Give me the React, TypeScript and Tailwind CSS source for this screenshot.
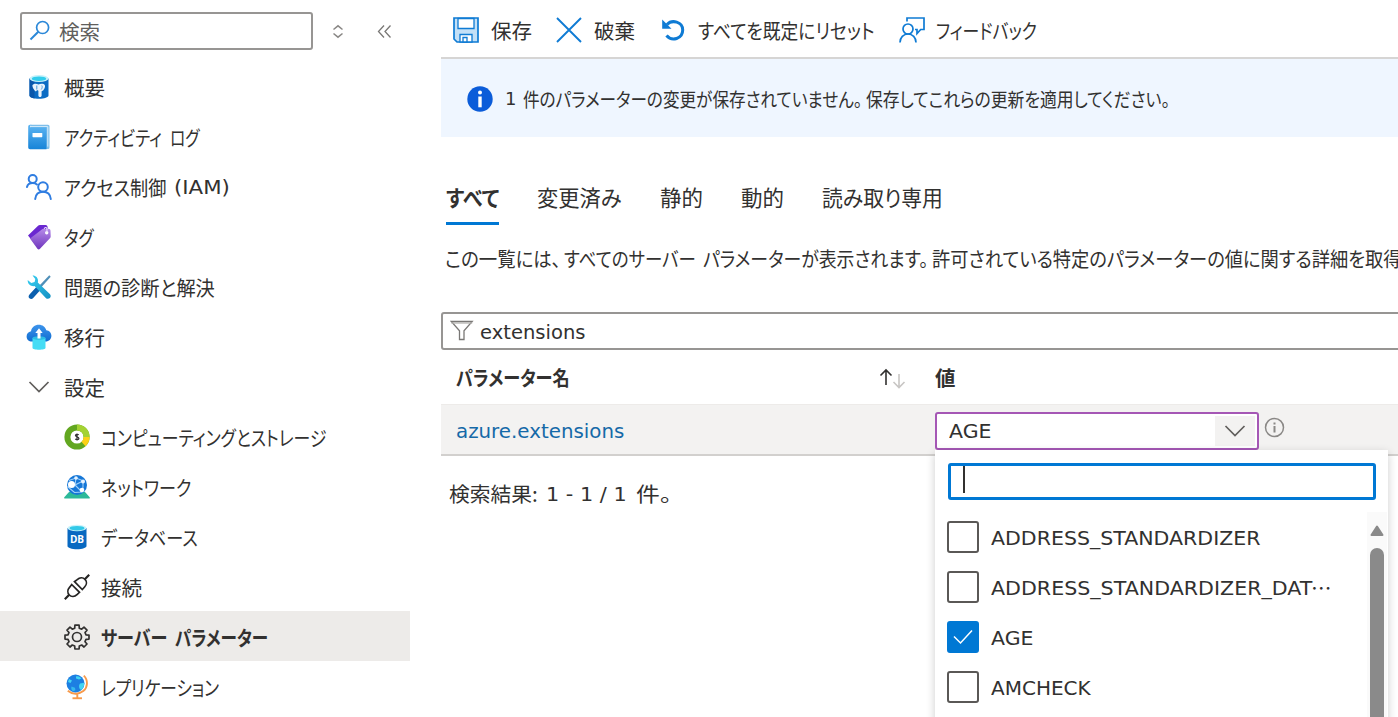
import { useLayoutEffect, useRef, useState } from 'react'
import type { ReactNode } from 'react'

// Labels use a condensed UI face: the run is squeezed horizontally until it
// fills exactly `w` pixels.
function Fit({ w, children, className = '' }: { w: number; children: ReactNode; className?: string }) {
  const ref = useRef<HTMLSpanElement>(null)
  const [scale, setScale] = useState(1)

  useLayoutEffect(() => {
    if (ref.current) setScale(w / ref.current.offsetWidth)
  }, [w])

  return (
    <span className={`block shrink-0 ${className}`} style={{ width: w }}>
      <span ref={ref} className="inline-block origin-left whitespace-nowrap" style={{ transform: `scaleX(${scale})` }}>
        {children}
      </span>
    </span>
  )
}

function SearchIcon() {
  return (
    <svg width="22" height="22" viewBox="0 0 22 22" fill="none" stroke="#2b88d8" strokeWidth="1.7">
      <circle cx="13.6" cy="7.500" r="6" />
      <path d="M9.3 11.800 1.5 19.500" strokeWidth="2" />
    </svg>
  )
}

function PostgresIcon() {
  return (
    <svg width="26" height="26" viewBox="0 0 26 26">
      <path d="M3.500 4.500v17c0 1.800 4.200 3.300 9.500 3.300s9.500-1.500 9.500-3.300v-17z" fill="#0b6cc4" />
      <path d="M3.500 4.500v17c0 1.500 2 2.600 5 3v-20z" fill="#0a57ab" />
      <ellipse cx="13" cy="4.500" rx="9.500" ry="3.500" fill="#c5f1fa" />
      <ellipse cx="13" cy="4.700" rx="7.200" ry="2.300" fill="#32cdec" />
      <path d="M6.500 11c2-1.900 4-1.100 6-.6 2.200-1 5.500-.9 6.400.8.600 1.700-.8 4.300-2 5.500-.9.200-1.300 0-1.300 1v4c-.3 1.700-2.900 1.700-3.200 0v-5l-1.300-.6-1.200 1.500C8.400 16.600 6 13.100 6.500 11z" fill="#e9f3fc" />
      <path d="M10.800 11.500v4m5-4c.8 1.200.3 2.900-.6 4" stroke="#4f9bd9" strokeWidth="1" fill="none" />
    </svg>
  )
}

function LogIcon() {
  return (
    <svg width="26" height="26" viewBox="0 0 26 26">
      <defs>
        <linearGradient id="log" x1="0" y1="0" x2="0" y2="1">
          <stop offset="0" stopColor="#5eb5f2" />
          <stop offset="1" stopColor="#1784d8" />
        </linearGradient>
      </defs>
      <path d="M4.500.700H22a1.500 1.500 0 0 1 1.500 1.500v21.300a1.500 1.500 0 0 1-1.500 1.500H4z" fill="#7fbfea" />
      <path d="M4 2.600h17.800v20" fill="none" stroke="#d8edfb" strokeWidth="1" />
      <path d="M4 3.300h16.500v22H4A1.800 1.800 0 0 1 2.200 23.500V2.500A1.800 1.800 0 0 1 4 .700h1.500L4 2z" fill="url(#log)" />
      <rect x="6.500" y="9" width="9.800" height="4.200" rx=".6" fill="#fff" />
    </svg>
  )
}

function PeopleIcon() {
  return (
    <svg width="26" height="26" viewBox="0 0 26 26" fill="none" stroke="#2f7de1" strokeWidth="2" strokeLinecap="round">
      <circle cx="6.700" cy="5" r="4" />
      <path d="M1 13c.5-2.500 2.700-4 5.700-4 1.800 0 3.200.5 4.200 1.400" />
      <circle cx="17" cy="13" r="4.800" />
      <path d="M9.200 25c.5-4.500 3.500-7.200 7.800-7.200s7.300 2.700 7.800 7.200" />
    </svg>
  )
}

function TagIcon() {
  return (
    <svg width="26" height="26" viewBox="0 0 26 26">
      <defs>
        <linearGradient id="tag" x1="0" y1="0" x2="0" y2="1">
          <stop offset="0" stopColor="#b58ae8" />
          <stop offset="1" stopColor="#6f35bd" />
        </linearGradient>
      </defs>
      <path d="M2 11.500 11.800 2c.6-.7 1.300-1 2.200-1h5.500c1.200 0 2 .7 2.100 2l.2 3L8 19z" fill="#6a28d0" />
      <path d="M4 14.500 16.500 5l6-.300c1.200 0 2 .8 2 2l.2 5.500c0 1-.3 1.600-1 2.200L14 24.800c-.9.900-1.800.8-2.600 0z" fill="url(#tag)" />
      <circle cx="20.700" cy="8.800" r="1.700" fill="#fff" />
      <path d="M18.200 5c.2-1.800 2-2 2.600-.7.400 1 .2 2.700-.1 4.200" stroke="#eadcfb" strokeWidth="1.100" fill="none" />
    </svg>
  )
}

function ToolsIcon() {
  return (
    <svg width="26" height="26" viewBox="0 0 26 26">
      <defs>
        <linearGradient id="wrench" x1="0" y1="0" x2="1" y2="1">
          <stop offset="0" stopColor="#37d0f2" />
          <stop offset="1" stopColor="#1490c3" />
        </linearGradient>
      </defs>
      <path d="M23.300 1.300 24.700 2.700 14 14.800l-2-1.900z" fill="#4f8fb8" />
      <path d="m11 12.300 3.600 3.400-7.400 8.400c-1.100 1.200-2.700 1.200-3.800.1-1.100-1.100-1-2.700.1-3.800z" fill="#0b5fae" />
      <path d="M6.500 1.600c3-.2 5.800 2.300 5.500 5.600l-.2 1.400 12 11.300c1.200 1.200 1.200 2.900.1 4.100-1.200 1.100-3 1.100-4.100-.1L8.500 12.100c-3.300.6-7-1.600-6.800-6.100l3.600 3 3.300-1 .7-3z" fill="url(#wrench)" />
    </svg>
  )
}

function MigrateIcon() {
  return (
    <svg width="26" height="26" viewBox="0 0 26 26">
      <defs>
        <linearGradient id="cloud" x1="0" y1="0" x2="0" y2="1">
          <stop offset="0" stopColor="#3d94ec" />
          <stop offset="1" stopColor="#0f6cd0" />
        </linearGradient>
      </defs>
      <path d="M6 17.500c-3.200 0-5.400-2.200-5.400-5.100 0-2.700 1.800-4.700 4.400-5.200C5.700 3.300 8.800.8 12.800.8c3.700 0 6.500 2.200 7.500 5.400 2.900.3 5.100 2.600 5.100 5.500 0 3.300-2.400 5.800-5.800 5.800z" fill="url(#cloud)" />
      <path d="M6.500 14h13v10c0 1-3 1.700-6.500 1.700S6.500 25 6.500 24z" fill="#45dcf5" />
      <ellipse cx="13" cy="14" rx="6.500" ry="1.800" fill="#2cbde4" />
      <path d="m13 4.300 3.700 4.700h-2.200v5.500h-3V9H9.300z" fill="#fff" />
    </svg>
  )
}

function Chevron({ className = '' }: { className?: string }) {
  return (
    <svg className={className} width="22" height="14" viewBox="0 0 22 14" fill="none" stroke="#605e5c" strokeWidth="1.700">
      <path d="m1.500 2 9.500 9.500L20.500 2" />
    </svg>
  )
}

function ComputeIcon() {
  return (
    <svg width="26" height="26" viewBox="0 0 26 26" fill="none">
      <circle cx="13" cy="13" r="9.600" stroke="#62a720" strokeWidth="6" />
      <path d="M13 3.400a9.600 9.600 0 0 1 9.600 9.600" stroke="#a4d233" strokeWidth="6" />
      <path d="M22.600 13a9.600 9.600 0 0 1-3.100 7" stroke="#fcd116" strokeWidth="6" />
      <path d="M14.700 11c-.7-1-3.200-1-3.200.5 0 1.600 3.400 1 3.400 2.900 0 1.600-2.700 1.600-3.600.4M13 9.500v7" stroke="#333" strokeWidth="1.300" />
    </svg>
  )
}

function NetworkIcon() {
  return (
    <svg width="26" height="26" viewBox="0 0 26 26">
      <path d="M5 18h16l4.700 5.200v1.200H.300v-1.200z" fill="#2cb999" />
      <circle cx="13" cy="11" r="10" fill="#1677d7" />
      <path d="M5 6.500 12 4l7.500 3M12 4l-1 7 7 7M4 13l7-2 8-4v6l-1 5-7.500.500z" stroke="#9fd0fa" strokeWidth="1.100" fill="none" />
      <circle cx="7.500" cy="10.500" r="3.500" fill="#fff" />
      <circle cx="12" cy="4" r="1.800" fill="#e5f2ff" />
      <circle cx="19" cy="7.500" r="2" fill="#e5f2ff" />
      <circle cx="18" cy="16" r="2.300" fill="#fff" />
    </svg>
  )
}

function DatabaseIcon() {
  return (
    <svg width="26" height="26" viewBox="0 0 26 26">
      <path d="M3.500 4v18c0 1.800 4.200 3.300 9.500 3.300s9.500-1.500 9.500-3.300V4z" fill="#0869c1" />
      <ellipse cx="13" cy="4" rx="9.500" ry="3.300" fill="#c9f3fb" />
      <ellipse cx="13" cy="4.200" rx="7.500" ry="2.300" fill="#32c9e8" />
      <text x="13" y="18.700" textAnchor="middle" fontSize="10" fontWeight="700" fill="#fff" fontFamily="Open Sans, sans-serif">DB</text>
    </svg>
  )
}

function PlugIcon() {
  return (
    <svg width="26" height="26" viewBox="0 0 26 26" fill="none" stroke="#252423" strokeWidth="1.700">
      <path d="M.8 25.200 5.200 20.800M25.200.8l-4.400 4.400" strokeWidth="2.200" />
      <path d="m7.700 10.500 7.800 7.800-2.500 2.300c-2.400 2.300-5.700 2.400-7.700.4s-1.900-5.300.4-7.800z" />
      <path d="m10.500 7.700 7.800 7.800 2.300-2.500c2.300-2.400 2.400-5.700.4-7.700s-5.300-1.900-7.800.4z" />
    </svg>
  )
}

function GearIcon() {
  return (
    <svg width="26" height="26" viewBox="0 0 26 26" fill="none" stroke="#323130" strokeWidth="1.700" strokeLinejoin="round">
      <path d="m10.700 4.200.2-3h4.200l.2 3 2.400 1 2.300-2 3 3-2 2.300 1 2.400 3 .2v4l-3 .2-1 2.400 2 2.300-3 3-2.300-2-2.400 1-.2 3h-4.200l-.2-3-2.400-1-2.300 2-3-3 2-2.300-1-2.400-3-.2v-4l3-.2 1-2.400-2-2.300 3-3 2.300 2z" />
      <circle cx="13" cy="13" r="4.500" />
    </svg>
  )
}

function GlobeIcon() {
  return (
    <svg width="26" height="26" viewBox="0 0 26 26">
      <path d="M19.800 1.600c4.700 4.600 3.900 12-.5 15.500-4.600 3.700-11.300 3.300-15.500-.3M13.300 20v4" stroke="#f79a4b" strokeWidth="1.900" fill="none" />
      <path d="M8.500 23.300h9.500v1.900H8.500z" fill="#f79a4b" />
      <circle cx="11.500" cy="9.500" r="9" fill="#1d7fe2" />
      <path d="M12 2.500c2-.8 4.500.5 5.500 2l-2.500 1-3-1zM16 9.500l4.200-.7c.3 3-1 5.500-3 7.200-2-1-3-4-1.200-6.500zM5 5l3 1.500-1.500 2.500L4 8z" fill="#43d5f2" />
      <path d="m7.500 12.500 3.500 1.200.4 2.600-2 1c-2-.8-2.600-2.800-1.900-4.800z" fill="#35b9ee" />
    </svg>
  )
}

function SaveIcon() {
  return (
    <svg width="26" height="26" viewBox="0 0 26 26" fill="none" stroke="#0f7bd4" strokeWidth="1.700">
      <path d="M1 1h24v24H4l-3-3z" fill="#c3e0f7" />
      <path d="M5 1.500h16v10H5zM7 17.500h12V25H7z" fill="#fff" strokeWidth="1.300" />
      <path d="M10 20.500h4V25h-4z" fill="#fff" strokeWidth="1.300" />
    </svg>
  )
}

function CloseIcon() {
  return (
    <svg width="26" height="26" viewBox="0 0 26 26" fill="none" stroke="#0f7bd4" strokeWidth="1.900">
      <path d="m1 1 24 24M25 1 1 25" />
    </svg>
  )
}

function UndoIcon() {
  return (
    <svg width="24" height="24" viewBox="0 0 24 24">
      <path d="M6 6.500C11 1.200 21.700 3.700 21.700 12c0 8.700-10.800 12-16.200 5.500" fill="none" stroke="#0f7bd4" strokeWidth="3" />
      <path d="M1.200 1.500v9.300h9.300z" fill="#0f7bd4" />
    </svg>
  )
}

function FeedbackIcon() {
  return (
    <svg width="26" height="26" viewBox="0 0 26 26" fill="none" stroke="#0f7bd4" strokeWidth="1.700">
      <path d="M8 4.500V1h17v11.500h-3.300L18 16.500v-4h-2" />
      <circle cx="9" cy="12" r="5" />
      <path d="M1 25.500C1 20.500 4.500 17 9 17s8 3.500 8 8.500" />
    </svg>
  )
}

function FunnelIcon() {
  return (
    <svg width="24" height="22" viewBox="0 0 24 22" fill="none" stroke="#797775" strokeWidth="1.300">
      <path d="M1.300 1.500h20.900L14 10.800v8.700H9.500v-8.700z" />
      <path d="M1.300 3h20.900" stroke="#b5b3b1" />
    </svg>
  )
}

const LATIN = "font-['DejaVu_Sans',sans-serif] text-[19px]"

const NAV = [
  { label: '概要', w: 41, icon: <PostgresIcon /> },
  { label: 'アクティビティ', w: 98, tail: 'ログ', tailWidth: 30, icon: <LogIcon /> },
  { label: 'アクセス制御', w: 102, tail: '(IAM)', tailWidth: 56, icon: <PeopleIcon /> },
  { label: 'タグ', w: 30, icon: <TagIcon /> },
  { label: '問題の診断と解決', w: 151, icon: <ToolsIcon /> },
  { label: '移行', w: 41, icon: <MigrateIcon /> },
  { label: '設定', w: 41, icon: <Chevron className="mx-[2px]" /> },
]

const SETTINGS = [
  { label: 'コンピューティングとストレージ', w: 225, icon: <ComputeIcon /> },
  { label: 'ネットワーク', w: 90, icon: <NetworkIcon /> },
  { label: 'データベース', w: 97, icon: <DatabaseIcon /> },
  { label: '接続', w: 41, icon: <PlugIcon /> },
  { label: 'サーバー', w: 66, tail: 'パラメーター', tailWidth: 93, icon: <GearIcon />, selected: true },
  { label: 'レプリケーション', w: 118, icon: <GlobeIcon /> },
]

const TABS = [
  { label: 'すべて', w: 53, active: true },
  { label: '変更済み', w: 85 },
  { label: '静的', w: 43 },
  { label: '動的', w: 43 },
  { label: '読み取り専用', w: 121 },
]

const OPTIONS = [
  { label: 'ADDRESS_STANDARDIZER', w: 269, checked: false },
  { label: 'ADDRESS_STANDARDIZER_DAT', w: 321, checked: false, cut: true },
  { label: 'AGE', w: 42, checked: true },
  { label: 'AMCHECK', w: 100, checked: false },
]

function Sidebar() {
  return (
    <nav className="w-[410px] shrink-0">
      <div className="flex h-[62px] items-start pt-[12px] pl-5">
        <div className="flex h-[38px] w-[293px] items-center gap-[8px] rounded-[3px] border-2 border-[#979593] pl-[7px] text-[#605e5c]">
          <SearchIcon />
          <Fit w={41}>検索</Fit>
        </div>
        <svg className="mt-3 ml-[19px]" width="12" height="15" viewBox="0 0 12 15" fill="none" stroke="#8a8886" strokeWidth="1.500">
          <path d="M1.500 5.500 6 1.800 10.500 5.500M1.500 9.500 6 13.200 10.500 9.500" />
        </svg>
        <svg className="mt-3 ml-[33px]" width="15" height="15" viewBox="0 0 15 15" fill="none" stroke="#797775" strokeWidth="1.300">
          <path d="M7 1.500 1.500 7.500 7 13.500M13.500 1.500 8 7.500l5.500 6" />
        </svg>
      </div>
      {NAV.map((item) => (
        <div key={item.label} className="flex h-[49.9px] items-center pt-px pl-[26px]">
          {item.icon}
          <Fit w={item.w} className="ml-[12px]">{item.label}</Fit>
          {item.tail && (
            <Fit w={item.tailWidth} className={`ml-[8px] ${item.tail === '(IAM)' ? LATIN : ''}`}>{item.tail}</Fit>
          )}
        </div>
      ))}
      {SETTINGS.map((item) => (
        <div
          key={item.label}
          className={`flex h-[49.9px] items-center pt-[2px] pl-[64px] ${item.selected ? 'bg-[#edebe9] font-bold' : ''}`}
        >
          {item.icon}
          <Fit w={item.w} className="ml-[11px]">{item.label}</Fit>
          {item.tail && <Fit w={item.tailWidth} className="ml-[8px]">{item.tail}</Fit>}
        </div>
      ))}
    </nav>
  )
}

function Toolbar() {
  return (
    <div className="flex h-[59px] items-center border-b-2 border-[#d6d5d4] pt-[2px] pl-[12px]">
      <SaveIcon />
      <Fit w={41} className="ml-[12px]">保存</Fit>
      <span className="ml-[24px]"><CloseIcon /></span>
      <Fit w={41} className="ml-[12px]">破棄</Fit>
      <span className="ml-[26px]"><UndoIcon /></span>
      <Fit w={177} className="ml-[13px]">すべてを既定にリセット</Fit>
      <span className="ml-[24px]"><FeedbackIcon /></span>
      <Fit w={101} className="ml-[11px]">フィードバック</Fit>
    </div>
  )
}

function Dropdown() {
  return (
    <div className="absolute top-[45px] left-[494px] flex h-[280px] w-[453px] flex-col bg-white pt-[13px] shadow-[0_3px_9px_rgba(0,0,0,0.2)]">
      <div className="ml-[13px] h-[37px] w-[428px] rounded-[3px] border-3 border-[#0078d4] pl-[12px]">
        <div className="h-[27px] w-[1.500px] bg-[#323130]" />
      </div>
      <div className="mt-[12px] flex flex-1">
        <div className="flex w-[431px] flex-col">
          {OPTIONS.map((option) => (
            <div key={option.label} className="flex h-[50px] items-center pl-[12px]">
              <div
                className={`flex size-8 items-center justify-center rounded-[3px] border-2 ${
                  option.checked ? 'border-[#0078d4] bg-[#0078d4]' : 'border-[#5a5856] bg-white'
                }`}
              >
                {option.checked && (
                  <svg width="20" height="16" viewBox="0 0 20 16" fill="none" stroke="#fff" strokeWidth="1.500">
                    <path d="m1 7.500 6.500 6.500L19 1.500" />
                  </svg>
                )}
              </div>
              <Fit w={option.w} className={`mt-px ml-[12px] ${LATIN}`}>{option.label}</Fit>
              {option.cut && <span className="-ml-px">⋯</span>}
            </div>
          ))}
        </div>
        <div className="ml-px flex w-[20px] flex-col items-center bg-[#fafafa] pt-[13px]">
          <svg width="14" height="11" viewBox="0 0 14 11">
            <path d="M7 1.500 12.500 10h-11z" fill="#8a8a8a" stroke="#8a8a8a" strokeWidth="2" strokeLinejoin="round" />
          </svg>
          <div className="mt-[12px] w-[14px] flex-1 rounded-t-full bg-[#8a8a8a]" />
        </div>
      </div>
    </div>
  )
}

export default function App() {
  return (
    <div className="flex h-[717px] w-[1398px] overflow-hidden bg-white font-['Noto_Sans_CJK_JP',sans-serif] text-[20.500px] leading-[30px] text-[#323130] [font-feature-settings:'palt']">
      <Sidebar />
      <main className="ml-[31px] w-[957px] shrink-0">
        <Toolbar />
        <div className="flex h-[78px] items-center bg-[#eff6ff] pt-px pl-[26px] text-[19.500px]">
          <svg width="26" height="26" viewBox="0 0 26 26">
            <circle cx="13" cy="13" r="12.700" fill="#0b5cd9" />
            <circle cx="13" cy="6.500" r="2" fill="#fff" />
            <path d="M11.300 10.500h3.400v10.800h-3.400z" fill="#fff" />
          </svg>
          <Fit w={11} className="ml-[12px] font-['DejaVu_Sans',sans-serif] text-[18px]">1</Fit>
          <Fit w={339} className="ml-[7px]">件のパラメーターの変更が保存されていません。</Fit>
          <Fit w={304} className="ml-[4px]">保存してこれらの更新を適用してください。</Fit>
        </div>

        <div className="mt-[44px] flex h-[44px] gap-[38px] pl-[5px] text-[22px]">
          {TABS.map((tab) => (
            <div key={tab.label} className={`h-full ${tab.active ? 'border-b-3 border-[#0078d4] font-bold' : ''}`}>
              <Fit w={tab.w}>{tab.label}</Fit>
            </div>
          ))}
        </div>

        <div className="mt-[18px] flex h-[30px] overflow-hidden pl-[4px]">
          <Fit w={116}>この一覧には、</Fit>
          <Fit w={132} className="ml-[3px]">すべてのサーバー</Fit>
          <Fit w={225} className="ml-[7px]">パラメーターが表示されます。</Fit>
          <Fit w={470} className="ml-[4px]">許可されている特定のパラメーターの値に関する詳細を取得</Fit>
        </div>

        <div className="mt-[39px] flex h-[38px] w-[980px] items-center rounded-[3px] border-2 border-[#979593] pl-[7px]">
          <FunnelIcon />
          <Fit w={106} className={`mt-px ml-[6px] ${LATIN}`}>extensions</Fit>
        </div>

        <div className="flex h-[54px] items-center pl-[15px] font-bold">
          <Fit w={114}>パラメーター名</Fit>
          <svg className="mt-1 ml-[309px]" width="28" height="22" viewBox="0 0 28 22" fill="none" strokeWidth="1.600">
            <path d="M7 17V2M1.500 7.500 7 2l5.500 5.500" stroke="#323130" />
            <path d="M20 6v13.500M14.500 14l5.500 5.500 5.500-5.500" stroke="#c8c6c4" />
          </svg>
          <Fit w={21} className="ml-[28px]">値</Fit>
        </div>

        <div className="relative flex h-[52px] items-center border-t border-b-2 border-t-[#edebe9] border-b-[#d2d0ce] bg-[#f3f2f1] pt-[3px] pl-[15px]">
          <Fit w={168} className={`text-[#1569a8] ${LATIN}`}>azure.extensions</Fit>
          <div className={`ml-[311px] flex h-[38px] w-[324px] items-center justify-between rounded-[3px] border-2 border-[#a557b5] bg-white pr-[2px] pl-[12px] ${LATIN}`}>
            <Fit w={42}>AGE</Fit>
            <div className="flex h-[30px] w-[40px] items-center justify-center bg-[#f3f2f1]">
              <Chevron className="mr-px" />
            </div>
          </div>
          <svg className="mb-[7px] ml-[5px]" width="21" height="21" viewBox="0 0 21 21" fill="none" stroke="#8a8886" strokeWidth="1.500">
            <circle cx="10.500" cy="10.500" r="9" />
            <path d="M10.500 9v6.500M10.500 5.500v2" strokeWidth="2" />
          </svg>
          <Dropdown />
        </div>

        <div className="mt-[22px] flex pl-[8px]">
          <Fit w={89}>検索結果:</Fit>
          <Fit w={81} className={`mt-px ml-[8px] ${LATIN}`}>1 - 1 / 1</Fit>
          <Fit w={36} className="ml-[9px]">件。</Fit>
        </div>
      </main>
    </div>
  )
}
